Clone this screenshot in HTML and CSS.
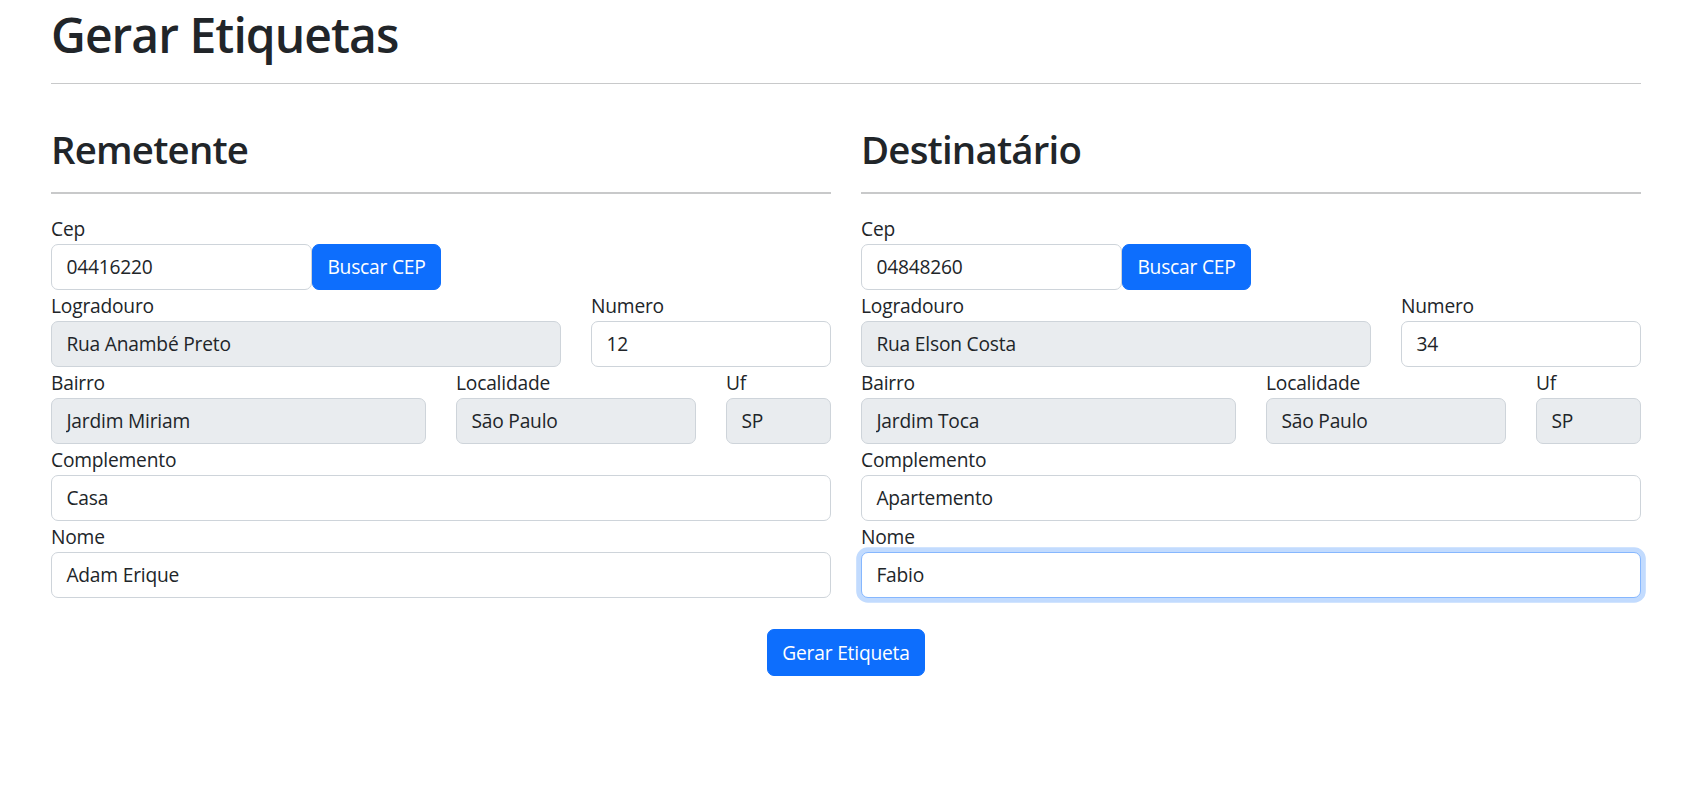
FILE: index.html
```html
<!DOCTYPE html>
<html lang="pt-BR">
<head>
<meta charset="utf-8">
<title>Gerar Etiquetas</title>
<link rel="stylesheet" href="styles.css">
</head>
<body>
<div class="container">
  <h1 class="title">Gerar Etiquetas</h1>
  <hr class="rule">
  <div class="columns">
    <section class="col">
      <h2 class="subtitle">Remetente</h2>
      <hr class="rule thick">
      <div class="form">
        <div class="group">
          <label class="label">Cep</label>
          <div class="cep-row">
            <input class="input cep" type="text" value="04416220">
            <button class="btn">Buscar CEP</button>
          </div>
        </div>
        <div class="row">
          <div class="group c8"><label class="label">Logradouro</label><input class="input ro" type="text" value="Rua Anambé Preto" readonly></div>
          <div class="group c4"><label class="label">Numero</label><input class="input" type="text" value="12"></div>
        </div>
        <div class="row">
          <div class="group c6"><label class="label">Bairro</label><input class="input ro" type="text" value="Jardim Miriam" readonly></div>
          <div class="group c4"><label class="label">Localidade</label><input class="input ro" type="text" value="São Paulo" readonly></div>
          <div class="group c2"><label class="label">Uf</label><input class="input ro" type="text" value="SP" readonly></div>
        </div>
        <div class="group"><label class="label">Complemento</label><input class="input" type="text" value="Casa"></div>
        <div class="group"><label class="label">Nome</label><input class="input" type="text" value="Adam Erique"></div>
      </div>
    </section>
    <section class="col">
      <h2 class="subtitle">Destinatário</h2>
      <hr class="rule thick">
      <div class="form">
        <div class="group">
          <label class="label">Cep</label>
          <div class="cep-row">
            <input class="input cep" type="text" value="04848260">
            <button class="btn">Buscar CEP</button>
          </div>
        </div>
        <div class="row">
          <div class="group c8"><label class="label">Logradouro</label><input class="input ro" type="text" value="Rua Elson Costa" readonly></div>
          <div class="group c4"><label class="label">Numero</label><input class="input" type="text" value="34"></div>
        </div>
        <div class="row">
          <div class="group c6"><label class="label">Bairro</label><input class="input ro" type="text" value="Jardim Toca" readonly></div>
          <div class="group c4"><label class="label">Localidade</label><input class="input ro" type="text" value="São Paulo" readonly></div>
          <div class="group c2"><label class="label">Uf</label><input class="input ro" type="text" value="SP" readonly></div>
        </div>
        <div class="group"><label class="label">Complemento</label><input class="input" type="text" value="Apartemento"></div>
        <div class="group"><label class="label">Nome</label><input class="input focus" type="text" value="Fabio"></div>
      </div>
    </section>
  </div>
  <div class="actions">
    <button class="btn big">Gerar Etiqueta</button>
  </div>
</div>
</body>
</html>
```

FILE: styles.css
```css
* { box-sizing: border-box; }
html, body { margin: 0; padding: 0; background: #fff; }
body {
  font-family: "Open Sans", "Noto Sans", sans-serif;
  color: #212529;
  font-size: 19.2px;
  letter-spacing: -0.2px;
}
.container {
  width: 1590px;
  margin-left: 51px;
  padding-top: 6px;
}
.title {
  margin: 0;
  font-size: 48px;
  line-height: 57.6px;
  font-weight: 600;
  letter-spacing: -0.95px;
}
.rule {
  border: 0;
  border-top: 1px solid #c8c9ca;
  margin: 19px 0 0;
  height: 0;
}
.rule.thick { border-top-width: 2px; margin-top: 20px; }
.columns {
  display: grid;
  grid-template-columns: 780px 780px;
  column-gap: 30px;
  margin-top: 42px;
}
.subtitle {
  margin: 0;
  font-size: 38.4px;
  line-height: 46px;
  font-weight: 600;
  letter-spacing: -0.8px;
}
.form { margin-top: 19px; }
.group { display: flex; flex-direction: column; }
.label {
  display: block;
  line-height: 29px;
  margin: 1px 0;
}
.row { display: flex; gap: 30px; }
.c8 { width: 510px; }
.c6 { width: 375px; }
.c4 { width: 240px; }
.c2 { width: 105px; }
.cep-row { display: flex; }
.input {
  display: block;
  width: 100%;
  height: 46px;
  padding: 0 14.4px;
  font: inherit;
  font-size: 19.2px;
  letter-spacing: -0.2px;
  color: #212529;
  background: #fff;
  border: 1px solid #ced4da;
  border-radius: 7px;
  outline: none;
}
.input.cep { width: 261px; }
.input.ro { background: #e9ecef; }
.input.focus {
  border-color: #86b7fe;
  box-shadow: 0 0 0 4.8px rgba(13,110,253,.25);
}
.btn {
  height: 46px;
  padding: 0 14.4px;
  font: inherit;
  font-size: 19.2px;
  letter-spacing: -0.2px;
  color: #fff;
  background: #0d6efd;
  border: 1px solid #0d6efd;
  border-radius: 7px;
  cursor: pointer;
}
.actions {
  display: flex;
  justify-content: center;
  margin-top: 31px;
}
.btn.big { height: 47px; }
```
